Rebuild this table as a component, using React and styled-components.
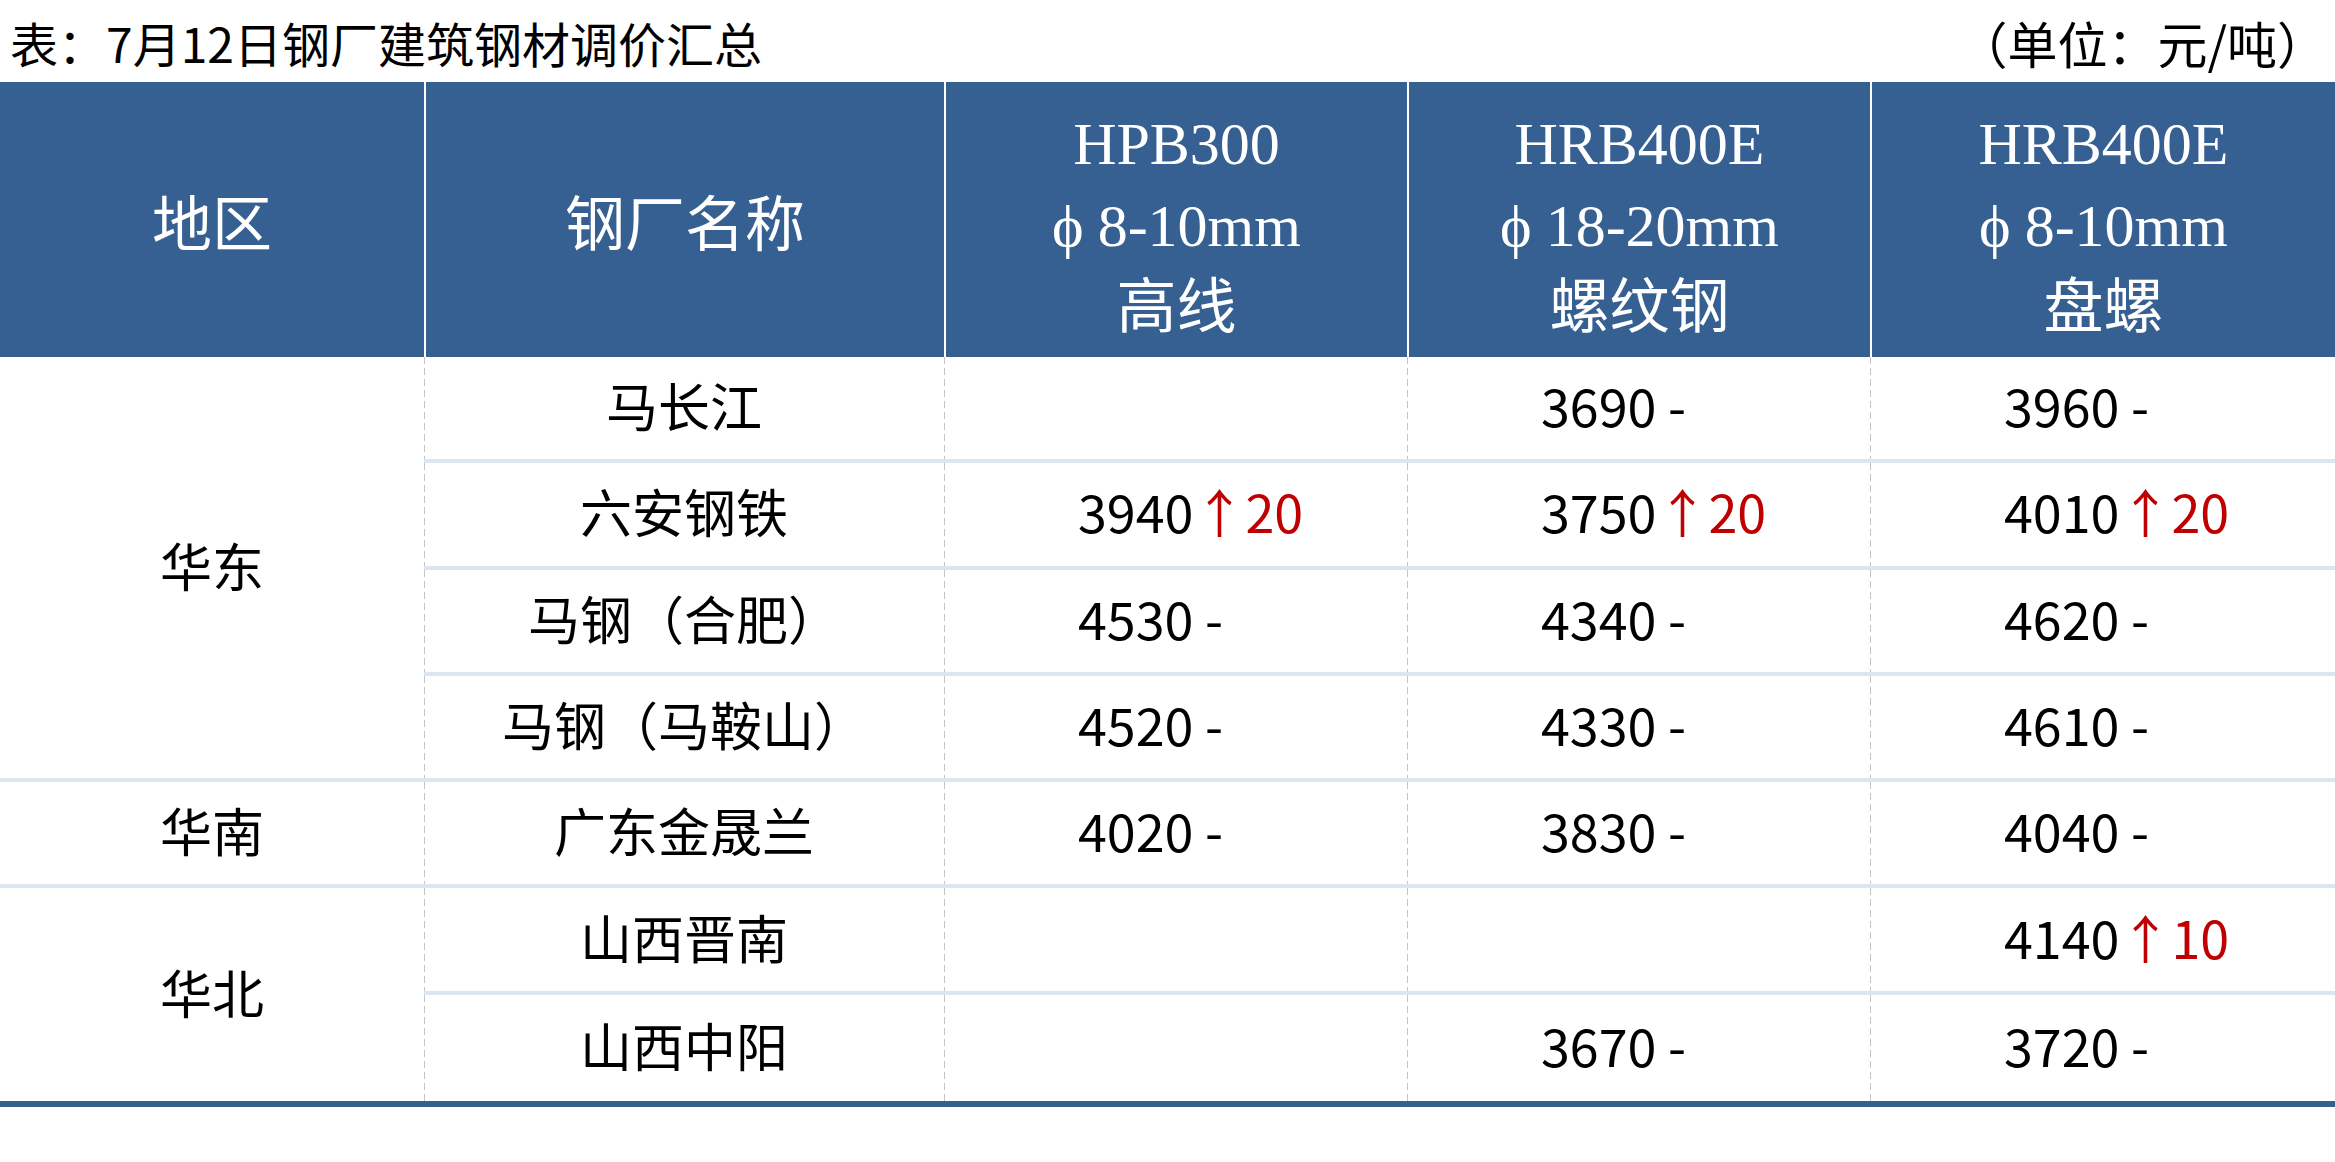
import React from "react";
import styled, { createGlobalStyle } from "styled-components";

const GlobalStyle = createGlobalStyle`
  html, body {
    margin: 0;
    padding: 0;
    background: #ffffff;
  }
  * {
    box-sizing: border-box;
  }
`;

const COLUMNS = "424px 520px 463px 463px 465px";

const HEADERS = [
  { id: "region", lines: ["地区"] },
  { id: "mill", lines: ["钢厂名称"] },
  { id: "hpb", grade: "HPB300", size: "8-10mm", kind: "高线" },
  { id: "hrb1", grade: "HRB400E", size: "18-20mm", kind: "螺纹钢" },
  { id: "hrb2", grade: "HRB400E", size: "8-10mm", kind: "盘螺" },
];

const REGIONS = [
  {
    name: "华东",
    rows: [
      ["马长江", null, { v: "3690" }, { v: "3960" }],
      ["六安钢铁", { v: "3940", up: "20" }, { v: "3750", up: "20" }, { v: "4010", up: "20" }],
      ["马钢（合肥）", { v: "4530" }, { v: "4340" }, { v: "4620" }],
      ["马钢（马鞍山）", { v: "4520" }, { v: "4330" }, { v: "4610" }],
    ],
  },
  {
    name: "华南",
    rows: [["广东金晟兰", { v: "4020" }, { v: "3830" }, { v: "4040" }]],
  },
  {
    name: "华北",
    rows: [
      ["山西晋南", null, null, { v: "4140", up: "10" }],
      ["山西中阳", null, { v: "3670" }, { v: "3720" }],
    ],
  },
];

const App = () => {
  const lastRegion = REGIONS.length - 1;
  return (
    <Page>
      <GlobalStyle />
      <TitleBar>
        <span>表：7月12日钢厂建筑钢材调价汇总</span>
        <Unit>（单位：元/吨）</Unit>
      </TitleBar>

      <HeadRow>
        {HEADERS.map((h, i) => (
          <HeadCell key={h.id} first={i === 0}>
            {h.lines ? (
              h.lines.map((l) => <HeadLine key={l}>{l}</HeadLine>)
            ) : (
              <>
                <HeadLine>{h.grade}</HeadLine>
                <HeadLine>
                  <Phi>ϕ</Phi>
                  {h.size}
                </HeadLine>
                <HeadLine>{h.kind}</HeadLine>
              </>
            )}
          </HeadCell>
        ))}
      </HeadRow>

      <Body>
        {REGIONS.map((region, ri) =>
          region.rows.map((row, rowIdx) => {
            const isLastRow = ri === lastRegion && rowIdx === region.rows.length - 1;
            return (
              <React.Fragment key={row[0]}>
                {rowIdx === 0 && (
                  <RegionCell span={region.rows.length} ruled={ri !== lastRegion}>
                    {region.name}
                  </RegionCell>
                )}
                <NameCell ruled={!isLastRow}>{row[0]}</NameCell>
                {row.slice(1).map((p, pi) => (
                  <PriceCell key={pi} ruled={!isLastRow}>
                    {p && (
                      <>
                        {p.v}
                        {p.up ? <Up>↑{p.up}</Up> : " -"}
                      </>
                    )}
                  </PriceCell>
                ))}
              </React.Fragment>
            );
          })
        )}
      </Body>
    </Page>
  );
};

const Page = styled.div`
  width: 2335px;
  font-family: "Noto Sans CJK SC", "Noto Sans", sans-serif;
  color: #000000;
`;

const TitleBar = styled.div`
  height: 82px;
  display: flex;
  align-items: center;
  justify-content: space-between;
  padding: 2px 8px 0 10px;
  font-size: 48px;
  line-height: 1;
`;

const Unit = styled.span`
  font-size: 50px;
`;

const HeadRow = styled.div`
  display: grid;
  grid-template-columns: ${COLUMNS};
  height: 275px;
  background: #366092;
`;

const HeadCell = styled.div`
  display: flex;
  flex-direction: column;
  align-items: center;
  justify-content: center;
  padding-top: 12px;
  border-left: ${(p) => (p.first ? "none" : "2px solid #ffffff")};
  color: #ffffff;
  font-family: "Liberation Serif", "Noto Sans CJK SC", serif;
  font-size: 60px;
`;

const HeadLine = styled.div`
  line-height: 82px;
  white-space: nowrap;
`;

const Phi = styled.span`
  margin-right: 14px;
`;

const Body = styled.div`
  display: grid;
  grid-template-columns: ${COLUMNS};
  grid-auto-rows: 106.3px;
  border-bottom: 6px solid #366092;
`;

const cellBase = `
  display: flex;
  align-items: center;
  padding-bottom: 6px;
  font-size: 52px;
  line-height: 1;
  white-space: nowrap;
`;

const dashedLeft = `
  background-image: linear-gradient(#c4c4c4 60%, rgba(255, 255, 255, 0) 0);
  background-position: left top;
  background-size: 1px 11px;
  background-repeat: repeat-y;
`;

const RegionCell = styled.div`
  ${cellBase}
  grid-row: span ${(p) => p.span};
  justify-content: center;
  border-bottom: ${(p) => (p.ruled ? "4px solid #dce6f1" : "none")};
`;

const NameCell = styled.div`
  ${cellBase}
  ${dashedLeft}
  justify-content: center;
  border-bottom: ${(p) => (p.ruled ? "4px solid #dce6f1" : "none")};
`;

const PriceCell = styled.div`
  ${cellBase}
  ${dashedLeft}
  padding-left: 134px;
  border-bottom: ${(p) => (p.ruled ? "4px solid #dce6f1" : "none")};
`;

const Up = styled.span`
  color: #c00000;
`;

export default App;
